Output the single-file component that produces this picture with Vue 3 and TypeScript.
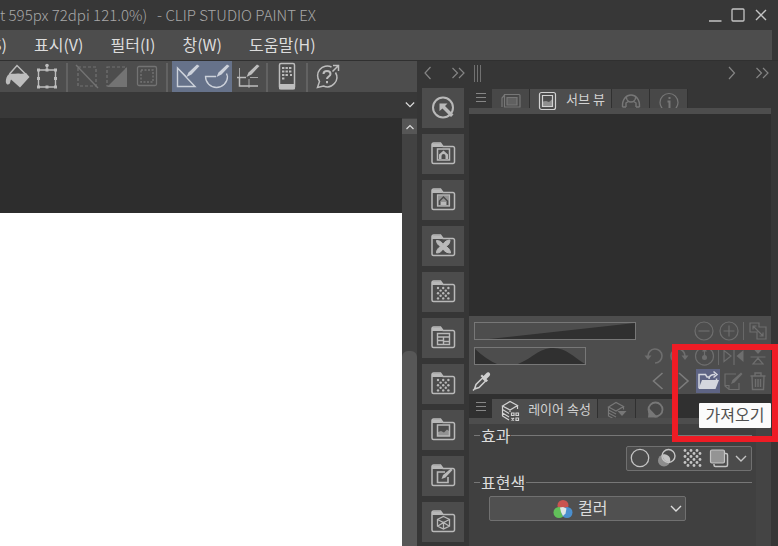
<script setup lang="ts">
import { ref } from 'vue'

interface Tool {
  name: string
  art: string
  active?: boolean
  dim?: boolean
}

const menus = ['표시(V)', '필터(I)', '창(W)', '도움말(H)']

const pen = '<path d="M14.500 16l2-4.500L25 3.500l2.500 1.500-8 8.500z" fill="currentColor" stroke="none"/>'

const toolGroups: Tool[][] = [
  [
    {
      name: '채우기',
      art: '<path d="M7.500 13L15 4.500 24 13.500" stroke-width="1.500"/><path d="M8 12.500c3 1 6-.5 9 0 3 .5 5 0 7-.5L27.500 16 18 26.500 9 18.500c-1 2-.5 5-3 5-2 0-2.500-2.500-2-5 .5-3 2-5 4-6z" fill="currentColor" stroke="none"/>',
    },
    {
      name: '변형',
      art: '<path d="M6.500 9h17v17h-17zM15 4v4" stroke-width="1.400"/><g fill="currentColor" stroke="none"><path d="M5 7.500h3v3H5zM22 7.500h3v3h-3zM5 24.500h3v3H5zM22 24.500h3v3h-3zM5 16h3v3H5zM22 16h3v3h-3zM13.500 24.500h3v3h-3zM13.500 7.500h3v3h-3z"/><circle cx="15" cy="4.500" r="1.800"/></g>',
    },
  ],
  [
    {
      name: '선택 해제',
      dim: true,
      art: '<path d="M6 6h18v19H6z" stroke-dasharray="3 2"/><path d="M4 4l22 23" stroke-width="1.400"/>',
    },
    {
      name: '선택 반전',
      dim: true,
      art: '<path d="M5 6h19v19H5z" stroke-dasharray="3 2"/><path d="M25 6v20H5z" fill="currentColor" stroke="none"/>',
    },
    {
      name: '선택 경계 표시',
      dim: true,
      art: '<rect x="5.500" y="5.500" width="19" height="19" rx="1.500" stroke-width="1.300"/><path d="M9 9h12v12H9z" stroke-dasharray="2 1.500" stroke-width="1.400"/>',
    },
  ],
  [
    {
      name: '자에 스냅',
      active: true,
      art: '<path d="M5.500 7v18.500h17.500zM5.500 7l9 9" stroke-width="1.400"/>' + pen,
    },
    {
      name: '특수 자에 스냅',
      active: true,
      art: '<path d="M14 15.500H3.500a11 11 0 0 0 22 0l-1-3" stroke-width="1.300"/>' + pen,
    },
    {
      name: '그리드에 스냅',
      art: '<path d="M5 16.500h9M7.500 16.500v8.500H26" stroke-width="1.500"/><path d="M18 16.500h8M17 18v9M7.500 7v9" stroke-width=".8"/>' + pen,
    },
  ],
  [
    {
      name: '컴패니언 모드',
      art: '<rect x="7.500" y="2.500" width="15" height="25" rx="1.500" stroke-width="1.500"/><path d="M7 23h16v4.500a1 1 0 0 1-1 1H8a1 1 0 0 1-1-1z" fill="currentColor" stroke="none"/><path d="M10 7h10M10 10.500h10M10 14h6M18 14h2M10 17.500h3" stroke-width="2.200" stroke-dasharray="2.400 1.100"/>',
    },
  ],
  [
    {
      name: '도움말',
      art: '<path d="M23.500 11.500A9.500 9.500 0 0 1 11.500 25L5.500 26.500 7.500 20.500A9.700 9.700 0 0 1 19.500 6" stroke-width="1.500"/><path d="M11.500 13c0-4 7-4 7 0 0 2.500-3.500 2.500-3.500 5M15 20v2.300" stroke-width="2"/><path d="M20.500 10.500L26 5M21 4.500h5.500V10" stroke-width="1.500"/>',
    },
  ],
]

const folder =
  '<path d="M4 8.500V5.500a1.500 1.500 0 0 1 1.500-1.500h7l2.500 3.500h10a1.500 1.500 0 0 1 1.500 1.500v14a1.500 1.500 0 0 1-1.500 1.500h-19.500a1.500 1.500 0 0 1-1.500-1.500z" stroke-width="1.500"/><path d="M4 4.500h8.500L15 8H4z" fill="currentColor" stroke="none"/>'
const dots = (x: number, y: number, cols: number, rows: number, step: number, r: number) => {
  let out = ''
  for (let row = 0; row < rows; row++)
    for (let col = 0; col < cols; col++)
      if ((row + col) % 2 === 0)
        out += `<circle cx="${x + col * step}" cy="${y + row * step}" r="${r}"/>`
  return `<g fill="currentColor" stroke="none">${out}</g>`
}
const house = '<path d="M11 20v-4.500l4.500-4 4.500 4V20h-2.500v-3a2 2 0 0 0-4 0v3z" fill="currentColor" stroke="none"/>'

const materials: Tool[] = [
  {
    name: '퀵 액세스',
    art: '<circle cx="15" cy="14.500" r="10" stroke-width="2"/><path d="M11.500 10.500h8L17 13l8.500 8.500-2.500 2.500-8.500-8.500-3 2.500z" fill="currentColor" stroke="none"/>',
  },
  { name: '컬러 패턴', art: folder + '<path d="M9.500 10h12v11h-12z" stroke-width="1.500"/>' + house },
  {
    name: '단색 패턴',
    art: folder + '<path d="M9 9.500h13v12H9z" fill="currentColor" opacity=".65" stroke="none"/><path d="M9.500 10h12v11h-12z"/><path d="M11.500 20v-4l4-4 4 4v4" stroke="#4a4a4a" stroke-width="1.500"/><path d="M13 20v-3h5v3" fill="currentColor" stroke="none"/>',
  },
  {
    name: '말풍선',
    art: folder + '<path d="M8.500 9.500c3 0 5 1 6.500 4 1.500-3 4-4.500 7-4.500 0 3-1.500 5-4 6.500 3 1.500 4.500 4 4.500 6.500-3.500 0-6-1.500-7.500-4-1.500 2.500-3.500 4-6.500 4 0-3 1.500-5 4-6.500-2.500-1.500-4-3.500-4-6z" fill="currentColor" stroke="currentColor" stroke-width="1"/>',
  },
  { name: '망점', art: folder + dots(10, 11, 5, 5, 2.6, 1.2) },
  {
    name: '컷 분할',
    art: folder + '<path d="M9.500 10.500h12v11h-12zM9.500 14h12M15.500 14v7.500M9.500 17.500h6M15.500 18.500h6" stroke-width="1.400"/>',
  },
  { name: '톤', art: folder + dots(10, 11, 5, 5, 2.6, 1.2) },
  {
    name: '이미지',
    art: folder + '<path d="M9.500 10h12v11h-12z" stroke-width="1.500"/><path d="M10 21v-4l3-1 3 1.500 3-3 2 1.500v5z" fill="currentColor" opacity=".65" stroke="none"/>',
  },
  {
    name: '그리기',
    art: folder + '<path d="M17 11H9.500v10.500H20V16" stroke-width="1.600"/><path d="M13.500 18l1.500-4 8-6.500 1.500 1.500-7 7.500z" fill="currentColor" stroke="none"/>',
  },
  {
    name: '3D',
    art: folder + '<path d="M15.500 9.500l6 3v6.500l-6 3-6-3v-6.500zM9.500 12.500l6 3 6-3M15.500 15.500v6.500M10 19l5.500-3.500 5.500 3.500" stroke-width="1.300"/>',
  },
]

const art = {
  left: '<path d="M8.500 2L3 8l5.500 6"/>',
  right: '<path d="M4 2l5.500 6L4 14"/>',
  double: '<path d="M1.500 3l5 5-5 5M8 3l5 5-5 5"/>',
  navigator: '<path d="M5.500 5.500h14.500a1 1 0 0 1 1 1V18H5.500zM5.500 6L3 9v9M8 8.500h10V16H8z"/><path d="M8 8.500h10V16H8z" fill="currentColor" opacity=".5" stroke="none"/>',
  subview: '<rect x="3.500" y="3.500" width="16" height="17" rx="2"/><path d="M6.500 6.500h10v11h-10z"/><path d="M7 17v-4.500l3-.5 3 1 3.500-3V17z" fill="currentColor" opacity=".5" stroke="none"/>',
  item: '<path d="M3.500 18C2.500 2 21.500 2 20.500 18M7.500 8.500a4.500 4.500 0 0 0 9 0M7 13.500V18M17 13.500V18M7 14l3-2M17 14l-3-2M3.500 18H7M17 18h3.500" stroke-width="1.400"/>',
  info: '<circle cx="12" cy="13.500" r="9"/><path d="M10.500 12.500h2V19M12.500 8v2" stroke-width="2"/>',
  layer: '<path d="M4.500 7L12 2.500l7.500 4L12 11zM4.500 7v3.500l6.500 4M4.500 10.500V14l6.500 4M4.500 14v3l6.500 4M19.500 7v3M12 11v2"/><path d="M13.500 14h2.500v2.500h-2.500zM18 14h2.500v2.500H18zM18 19h2.500v2.500H18zM13.500 19l2.500 2.500M16 19l-2.500 2.500"/>',
  search: '<path d="M3.500 8L11 3.500l7.500 4L11 12zM3.500 8v3l7.500 4M3.500 11v3l7.500 4M3.500 14v3l4 2M18.500 8v2.500"/><path d="M12.500 12h9l-4.500 5z" fill="currentColor" stroke="none"/>',
  round: '<circle cx="12.500" cy="10.500" r="7" stroke-width="1.800"/><path d="M6 9l9 9.500H5z" fill="currentColor" stroke="none"/>',
  minus: '<circle cx="12" cy="12" r="9"/><path d="M6.500 12h11"/>',
  plus: '<circle cx="12" cy="12" r="9"/><path d="M6.500 12h11M12 6.500v11"/>',
  fit: '<path d="M4 4h9v4h7v12h-9v-7H4zM7 7l10 10M7 10.500V7h3.500M17 13.500V17h-3.500"/>',
  undo: '<path d="M6 12.500A7 7 0 1 1 13 19" stroke-width="1.600"/><path d="M2.500 11.500h7L6 16z" fill="currentColor" stroke="none"/>',
  redo: '<path d="M18 12.500A7 7 0 1 0 11 19" stroke-width="1.600"/><path d="M14.500 11.500h7L18 16z" fill="currentColor" stroke="none"/>',
  reset: '<path d="M7 5a9 9 0 1 0 11 0M12.500 6v8"/><circle cx="12.500" cy="13.500" r="2.500" fill="currentColor" stroke="none"/><path d="M10 7.500h5L12.500 3.500z" fill="currentColor" stroke="none"/>',
  flipH: '<path d="M3 6.500v11L10 12zM13 4v17"/><path d="M22.500 6v12L15.500 12z" fill="currentColor" stroke="none"/>',
  flipV: '<path d="M4.500 13h15M12 14l-5 6h10z"/><path d="M7 4.500h10L12 10z" fill="currentColor" stroke="none"/>',
  prev: '<path d="M16.500 4L7.500 12l9 8" stroke-width="1.600"/>',
  next: '<path d="M8 4l9 8-9 8" stroke-width="1.600"/>',
  open: '<path d="M3 19V5.500h6.500L11 8h3M20.500 9.500V12" stroke-width="1.500"/><path d="M6 11h17l-3.500 9H2.500z" fill="currentColor" stroke="none"/><path d="M13 10c0-3 2-4.500 6-4.500M17.500 2.500l3.500 3-3.500 3" stroke-width="1.500"/>',
  edit: '<path d="M15 5H4v12l4 3.500h10V14M4 16.500h4V20"/><path d="M10 15l1.500-4L20 3.500l1.500 1.500-8 8.500z" fill="currentColor" stroke="none"/>',
  trash: '<path d="M4.500 7h15M9 7V4h6v3M6 7l.5 13.500h11L18 7M9.500 10v8M12 10v8M14.500 10v8" stroke-width="1.400"/>',
  picker: '<path d="M4.500 20l1.500-4.500 6.500-6.500 3 3-6.500 6.500zM4.500 20L3 21.500" stroke-width="1.500"/><path d="M10.500 7L12 5.500l1.500 1.500L16.500 4c2-2 5 1 3 3l-3 3 1.500 1.500-1.500 1.500z" fill="currentColor" stroke="none"/>',
  ring: '<circle cx="13" cy="12" r="8.700" stroke-width="1.300"/>',
  extract: '<circle cx="11" cy="14.500" r="6" fill="currentColor" opacity=".55" stroke="none"/><circle cx="15.500" cy="10" r="6.500" stroke-width="1.400"/><path d="M9.500 8.500a7 7 0 0 0 7.500 7.500 6 6 0 0 0-7.500-7.500z" fill="currentColor" stroke="none"/>',
  tone: dots(6, 4.5, 6, 6, 3, 1.4),
  layerColor: '<path d="M9 18v1a1.500 1.500 0 0 0 1.500 1.500H21a1.500 1.500 0 0 0 1.500-1.500V9A1.500 1.500 0 0 0 21 7.500h-1" stroke-width="1.500"/><rect x="5.500" y="4" width="14" height="13" rx="1.500" fill="currentColor" fill-opacity=".6"/>',
  down: '<path d="M1 3l5 5 5-5" stroke-width="1.400"/>',
}

const effects = [
  { name: '경계 효과', art: art.ring },
  { name: '선 추출', art: art.extract },
  { name: '톤', art: art.tone },
  { name: '레이어 컬러', art: art.layerColor },
]

const zoom = ref(0)
const angle = ref(50)
const mode = ref('컬러')
</script>

<template>
  <div class="app">
    <header class="title">
      <h1>t 595px 72dpi 121.0%)&nbsp;&nbsp; - CLIP STUDIO PAINT EX</h1>
      <div class="window">
        <button aria-label="최소화"><svg viewBox="0 0 16 16"><path d="M2 14h12.500" stroke-width="1.500" /></svg></button>
        <button aria-label="최대화"><svg viewBox="0 0 16 16"><rect x="2" y="2" width="12" height="12" rx="1" stroke-width="1.300" /></svg></button>
        <button aria-label="닫기"><svg viewBox="0 0 16 16"><path d="M3 3l10 10M13 3L3 13" stroke-width="1.400" /></svg></button>
      </div>
    </header>
    <nav class="menu">
      <button class="cut">S)</button>
      <button v-for="m in menus" :key="m">{{ m }}</button>
    </nav>
    <main>
      <section class="work">
        <div class="tools">
          <div v-for="(group, i) in toolGroups" :key="i" class="group">
            <button v-for="t in group" :key="t.name" :aria-label="t.name" :class="{ active: t.active, dim: t.dim }">
              <svg viewBox="0 0 30 31" v-html="t.art"></svg>
            </button>
          </div>
        </div>
        <div class="doc">
          <button aria-label="문서 목록"><svg viewBox="0 0 12 12" v-html="art.down"></svg></button>
        </div>
        <div class="stage">
          <div class="canvas"><div class="paper"></div></div>
          <div class="scroll">
            <button aria-label="위로"><svg viewBox="0 0 12 12"><path d="M2.500 8L6 4.500 9.500 8" /></svg></button>
            <div class="thumb"></div>
          </div>
        </div>
      </section>

      <aside class="dock">
        <div class="head">
          <button aria-label="펼치기"><svg viewBox="0 0 12 16" v-html="art.left"></svg></button>
          <button aria-label="접기"><svg class="wide" viewBox="0 0 14 16" v-html="art.double"></svg></button>
        </div>
        <div class="materials">
          <button v-for="m in materials" :key="m.name" :aria-label="m.name">
            <svg viewBox="0 0 30 30" v-html="m.art"></svg>
          </button>
        </div>
      </aside>

      <aside class="panels">
        <div class="head">
          <i class="grip"></i>
          <span class="spacer"></span>
          <button aria-label="펼치기"><svg viewBox="0 0 12 16" v-html="art.right"></svg></button>
          <button aria-label="접기"><svg class="wide" viewBox="0 0 14 16" v-html="art.double"></svg></button>
        </div>

        <div class="tabs">
          <button class="list" aria-label="메뉴"><svg viewBox="0 0 12 12"><path d="M1 2.500h10M1 6.500h10M1 10.500h10" /></svg></button>
          <button class="tab small" aria-label="내비게이터"><svg viewBox="0 0 24 19" v-html="art.navigator"></svg></button>
          <button class="tab on sub"><svg viewBox="0 0 23 24" v-html="art.subview"></svg>서브 뷰</button>
          <button class="tab small" aria-label="아이템 뱅크"><svg viewBox="0 0 24 19" v-html="art.item"></svg></button>
          <button class="tab small" aria-label="정보"><svg viewBox="0 0 24 19" v-html="art.info"></svg></button>
        </div>
        <div class="strip"></div>
        <div class="preview"></div>

        <div class="controls">
          <div class="row">
            <label class="slider long">
              <svg viewBox="0 0 160 16" preserveAspectRatio="none"><path d="M14 16L160 0v16z" fill="#303030" stroke="none" /></svg>
              <input v-model="zoom" type="range" aria-label="확대/축소">
            </label>
            <span class="spacer"></span>
            <button aria-label="축소"><svg viewBox="0 0 24 24" v-html="art.minus"></svg></button>
            <button aria-label="확대"><svg viewBox="0 0 24 24" v-html="art.plus"></svg></button>
            <i class="bar"></i>
            <button aria-label="맞춤"><svg viewBox="0 0 24 24" v-html="art.fit"></svg></button>
          </div>
          <div class="row">
            <label class="slider">
              <svg viewBox="0 0 110 16" preserveAspectRatio="none"><path d="M0 1Q12 12 22 16H0zM43 16C58 10 64 0 78 0s20 9 32 16z" fill="#303030" stroke="none" /></svg>
              <input v-model="angle" type="range" aria-label="회전">
            </label>
            <span class="spacer"></span>
            <button aria-label="왼쪽 회전"><svg viewBox="0 0 24 24" v-html="art.undo"></svg></button>
            <button aria-label="오른쪽 회전"><svg viewBox="0 0 24 24" v-html="art.redo"></svg></button>
            <button aria-label="회전 리셋"><svg viewBox="0 0 24 24" v-html="art.reset"></svg></button>
            <i class="bar"></i>
            <button aria-label="좌우 반전"><svg viewBox="0 0 24 24" v-html="art.flipH"></svg></button>
            <button aria-label="상하 반전"><svg viewBox="0 0 24 24" v-html="art.flipV"></svg></button>
          </div>
          <div class="row">
            <button class="picker" aria-label="스포이트"><svg viewBox="0 0 24 24" v-html="art.picker"></svg></button>
            <span class="spacer"></span>
            <button class="nav" aria-label="이전"><svg viewBox="0 0 24 24" v-html="art.prev"></svg></button>
            <button class="nav" aria-label="다음"><svg viewBox="0 0 24 24" v-html="art.next"></svg></button>
            <button class="open" aria-label="가져오기"><svg viewBox="0 0 24 24" v-html="art.open"></svg></button>
            <button aria-label="편집"><svg viewBox="0 0 24 24" v-html="art.edit"></svg></button>
            <button aria-label="삭제"><svg viewBox="0 0 24 24" v-html="art.trash"></svg></button>
          </div>
        </div>

        <div class="tabs lower">
          <button class="list" aria-label="메뉴"><svg viewBox="0 0 12 12"><path d="M1 2.500h10M1 6.500h10M1 10.500h10" /></svg></button>
          <button class="tab on layer"><svg viewBox="0 0 23 24" v-html="art.layer"></svg>레이어 속성</button>
          <button class="tab small" aria-label="레이어 검색"><svg viewBox="0 0 24 19" v-html="art.search"></svg></button>
          <button class="tab small" aria-label="색상"><svg viewBox="0 0 24 19" v-html="art.round"></svg></button>
        </div>
        <div class="strip"></div>
        <div class="props">
          <h2>효과</h2>
          <div class="effects">
            <button v-for="e in effects" :key="e.name" :aria-label="e.name">
              <svg viewBox="0 0 26 25" v-html="e.art"></svg>
            </button>
            <button class="more" aria-label="더 보기"><svg viewBox="0 0 12 12" v-html="art.down"></svg></button>
          </div>
          <h2>표현색</h2>
          <div class="mode">
            <svg class="rgb" viewBox="0 0 20 20">
              <g stroke="none">
                <circle cx="10" cy="6.500" r="5.500" fill="#c95350" />
                <circle cx="6" cy="13.500" r="5.500" fill="#62c05a" />
                <circle cx="14" cy="13.500" r="5.500" fill="#4a8fcf" />
                <path d="M7 8.500l3-.500 3.500 1.500-1 5L10 17l-2-4z" fill="#dfe6e6" />
              </g>
            </svg>
            <select v-model="mode" aria-label="표현색">
              <option>컬러</option>
              <option>그레이</option>
              <option>모노크롬</option>
            </select>
            <svg class="arrow" viewBox="0 0 12 12" v-html="art.down"></svg>
          </div>
        </div>
        <div class="mark"></div>
        <div class="tip" role="tooltip">가져오기</div>
      </aside>
    </main>
  </div>
</template>

<style>
body {
  background: #373737;
}
</style>

<style scoped>
.app {
  display: flex;
  flex-direction: column;
  height: 100vh;
  overflow: hidden;
  background: #363636;
  color: #dcdcdc;
  font: 16px/24px "Noto Sans CJK KR", sans-serif;
}
button {
  display: flex;
  align-items: center;
  justify-content: center;
  flex: none;
  margin: 0;
  padding: 0;
  border: 0;
  background: none;
  color: inherit;
  font: inherit;
}
svg {
  display: block;
  flex: none;
  fill: none;
  stroke: currentColor;
  stroke-width: 1.2;
}
.spacer {
  flex: 1;
}
.title {
  display: flex;
  align-items: center;
  justify-content: space-between;
  flex: none;
  height: 30px;
  padding-right: 9px;
  background: #373737;
  color: #a8a8a8;
}
h1 {
  margin: 0;
  font-size: 15px;
  font-weight: 300;
  white-space: nowrap;
}
.window {
  display: flex;
  gap: 7px;
  color: #c4c4c4;
}
.window svg {
  width: 16px;
  height: 16px;
}
.menu {
  display: flex;
  align-items: flex-start;
  gap: 27px;
  flex: none;
  height: 30px;
  margin-right: 6px;
  padding-top: 2px;
  box-sizing: border-box;
  background: #4d4d4d;
}
.menu .cut {
  width: 7px;
  justify-content: flex-end;
}
main {
  display: flex;
  flex: 1;
  min-height: 0;
  border-top: 1px solid #303030;
}
.work {
  display: flex;
  flex-direction: column;
  flex: 1;
  min-width: 0;
}
.tools {
  display: flex;
  flex: none;
  height: 31px;
  padding-left: 2px;
  background: #4d4d4d;
  color: #bdbdbd;
}
.group {
  display: flex;
}
.group + .group::before {
  content: "";
  width: 2px;
  margin: 2px 4px 0;
  background: #626262;
}
.tools button,
.tools svg {
  width: 30px;
  height: 31px;
}
.tools .active {
  background: #66728a;
  color: #ccd1da;
}
.tools .dim {
  color: #737373;
}
.doc {
  display: flex;
  justify-content: flex-end;
  flex: none;
  height: 26px;
  padding-right: 2px;
  background: #383838;
}
.doc svg {
  width: 10px;
  height: 10px;
}
.stage {
  display: flex;
  flex: 1;
  min-height: 0;
}
.canvas {
  display: flex;
  flex: 1;
  padding-top: 95px;
  background: #2d2d2d;
}
.paper {
  flex: 1;
  background: #fff;
}
.scroll {
  display: flex;
  flex-direction: column;
  justify-content: space-between;
  width: 15px;
  padding-top: 1px;
  background: #424242;
}
.scroll button {
  height: 15px;
  background: #565656;
}
.scroll svg {
  width: 12px;
  height: 12px;
}
.thumb {
  height: 195px;
  border-radius: 6px 6px 0 0;
  background: #575757;
}
.dock {
  flex: none;
  width: 52px;
}
.head {
  display: flex;
  align-items: center;
  height: 24px;
  color: #858585;
}
.head svg {
  width: 12px;
  height: 16px;
}
.head .wide {
  width: 14px;
}
.dock .head {
  justify-content: space-between;
  padding: 0 4px 0 5px;
}
.materials {
  display: flex;
  flex-direction: column;
  gap: 6px;
  padding: 3px 5px 0;
  color: #b9b9b9;
}
.materials button {
  height: 40px;
  background: #4c4c4c;
}
.materials svg {
  width: 30px;
  height: 30px;
}
.panels {
  position: relative;
  display: flex;
  flex-direction: column;
  flex: none;
  width: 302px;
  padding-right: 7px;
}
.panels .head {
  gap: 18px;
  padding: 0 2px 0 5px;
}
.grip {
  width: 1px;
  height: 17px;
  border: 1px solid #717171;
  border-width: 0 1px;
  padding: 0 2px;
  background: linear-gradient(#717171, #717171) center / 1px 100% no-repeat;
}
.tabs {
  display: flex;
  align-items: flex-end;
  flex: none;
  height: 23px;
}
.tabs .list {
  align-self: flex-start;
  width: 23px;
  height: 22px;
  padding-top: 1px;
  color: #868686;
}
.list svg {
  width: 12px;
  height: 12px;
}
.tab {
  height: 19px;
  border-right: 1px solid #303030;
  background: #484848;
  color: #777;
  font-size: 13px;
}
.tab.small {
  width: 38px;
}
.tab.small svg {
  width: 24px;
  height: 19px;
}
.tab.on {
  gap: 7px;
  position: relative;
  z-index: 1;
  background: #4d4d4d;
  color: #d2d2d2;
}
.tab.on svg {
  width: 23px;
  height: 24px;
  margin-top: 5px;
}
.tab.sub {
  width: 82px;
}
.tab.layer {
  width: 106px;
}
.strip {
  flex: none;
  height: 6px;
  background: #4d4d4d;
}
.preview {
  flex: none;
  height: 202px;
  background: #2e2e2e;
}
.controls {
  flex: none;
  height: 78px;
  box-sizing: border-box;
  padding: 2px 1px 0 5px;
  background: #4d4d4d;
  color: #6e6e6e;
}
.row {
  display: flex;
  align-items: center;
  gap: 1px;
  height: 25px;
}
.row button,
.row button svg {
  width: 24px;
  height: 24px;
}
.row .picker {
  color: #cfcfcf;
  margin-left: -4px;
}
.row .nav {
  color: #7c7c7c;
}
.row .open {
  background: #5e6484;
  color: #d4d6de;
}
.bar {
  width: 1px;
  height: 18px;
  margin: 0 1px;
  background: #686868;
}
.slider {
  display: grid;
  width: 112px;
  height: 18px;
  box-sizing: border-box;
  border: 1px solid #777;
}
.slider.long {
  width: 162px;
}
.slider svg,
.slider input {
  grid-area: 1 / 1;
  width: 100%;
  height: 16px;
  margin: 0;
}
.slider input {
  opacity: 0;
}
.tabs.lower {
  height: 24px;
  background: #303030;
}
.props {
  display: flex;
  flex-direction: column;
  flex: 1;
  min-height: 0;
  padding: 0 4px 0 5px;
  border-right: 15px solid #444;
  background: #404040;
}
h2 {
  display: flex;
  align-items: center;
  gap: 1px;
  height: 22px;
  margin: 0;
  font-size: 16px;
  font-weight: 400;
}
h2::before,
h2::after {
  content: "";
  width: 6px;
  height: 1px;
  background: #777;
}
h2::after {
  flex: 1;
}
.effects {
  display: flex;
  align-items: center;
  align-self: flex-end;
  box-sizing: border-box;
  height: 25px;
  border: 1px solid #707070;
  border-radius: 2px;
  background: #4b4b4b;
  color: #c4c4c4;
}
.effects svg {
  width: 26px;
  height: 25px;
}
.effects .more svg,
.arrow {
  width: 12px;
  height: 12px;
}
.effects .more {
  width: 20px;
}
.mode {
  display: flex;
  align-items: center;
  box-sizing: border-box;
  width: 197px;
  height: 25px;
  margin: 3px 0 0 15px;
  padding: 0 3px;
  border: 1px solid #707070;
  border-radius: 2px;
  background: #505050;
}
.rgb {
  width: 20px;
  height: 20px;
  margin-left: 60px;
}
.mode select {
  flex: 1;
  min-width: 0;
  height: 24px;
  padding: 0 0 4px 5px;
  border: 0;
  appearance: none;
  background: none;
  color: #dcdcdc;
  font: inherit;
  line-height: 20px;
}
.mark {
  position: absolute;
  top: 283px;
  right: 0;
  box-sizing: border-box;
  width: 106px;
  height: 98px;
  border: 6px solid #ee1c25;
}
.tip {
  position: absolute;
  top: 342px;
  right: 7px;
  width: 72px;
  height: 25px;
  border-radius: 1px;
  background: #fbfbfb;
  color: #505050;
  line-height: 23px;
  text-align: center;
}
</style>
